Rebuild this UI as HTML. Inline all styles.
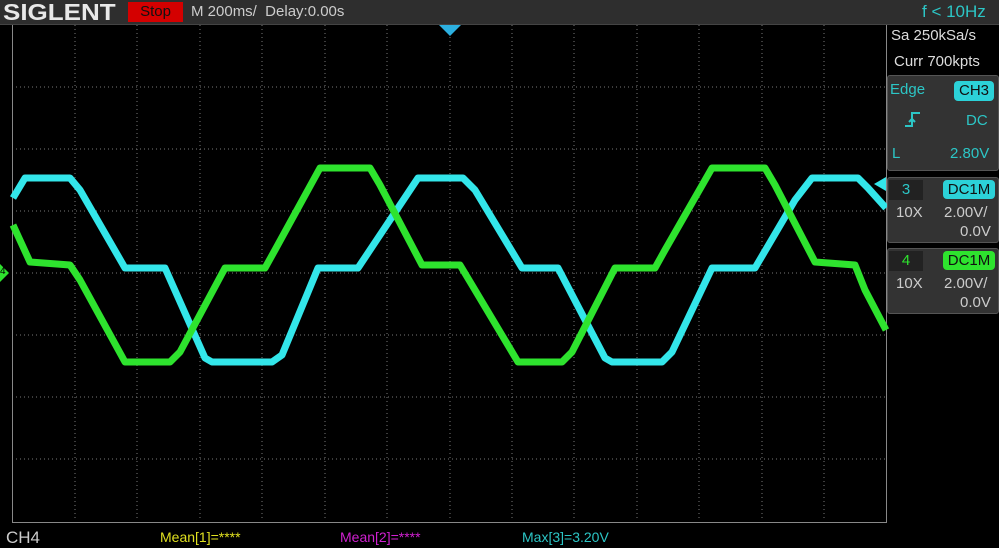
<!DOCTYPE html>
<html><head><meta charset="utf-8"><style>
body{margin:0;width:999px;height:548px;background:#000;overflow:hidden;position:relative;font-family:"Liberation Sans",sans-serif}
.top{position:absolute;left:0;top:0;width:999px;height:24px;background:#2e2e2e;border-bottom:1px solid #444}
.t{position:absolute;white-space:nowrap}
.box{position:absolute;background:#333;border:1px solid #555;border-radius:3px}
</style></head><body>
<div class="top"></div>
<div class="t" style="left:3px;top:-1px;font-size:23px;font-weight:bold;color:#e8e8e8;transform:scaleX(1.13);transform-origin:left">SIGLENT</div>
<div class="t" style="left:128px;top:2px;width:55px;height:20px;background:#d40000;color:#111;font-size:15px;text-align:center;line-height:20px">Stop</div>
<div class="t" style="left:191px;top:3px;font-size:15px;color:#ccc">M 200ms/&nbsp; Delay:0.00s</div>
<div class="t" style="left:922px;top:2px;font-size:17px;color:#2cc6c6">f &lt; 10Hz</div>
<svg width="999" height="548" style="position:absolute;left:0;top:0">
<g stroke="#777" stroke-width="1" stroke-dasharray="1,3">
<line x1="75" y1="25" x2="75" y2="521"/><line x1="137" y1="25" x2="137" y2="521"/><line x1="200" y1="25" x2="200" y2="521"/><line x1="262" y1="25" x2="262" y2="521"/><line x1="325" y1="25" x2="325" y2="521"/><line x1="387" y1="25" x2="387" y2="521"/><line x1="450" y1="25" x2="450" y2="521"/><line x1="512" y1="25" x2="512" y2="521"/><line x1="574" y1="25" x2="574" y2="521"/><line x1="637" y1="25" x2="637" y2="521"/><line x1="699" y1="25" x2="699" y2="521"/><line x1="762" y1="25" x2="762" y2="521"/><line x1="824" y1="25" x2="824" y2="521"/>
<line x1="12" y1="87" x2="886" y2="87"/><line x1="12" y1="149" x2="886" y2="149"/><line x1="12" y1="211" x2="886" y2="211"/><line x1="12" y1="273" x2="886" y2="273"/><line x1="12" y1="335" x2="886" y2="335"/><line x1="12" y1="397" x2="886" y2="397"/><line x1="12" y1="459" x2="886" y2="459"/>
</g>
<g stroke="#888" stroke-width="1"><line x1="12.5" y1="25" x2="12.5" y2="522"/><line x1="12" y1="522.5" x2="887" y2="522.5"/><line x1="886.5" y1="25" x2="886.5" y2="522"/></g>
<polyline fill="none" stroke="#33e6ea" stroke-width="7" stroke-linejoin="round" points="13,198 25,178 70,178 80,190 125,268 165,268 205,358 212,362 272,362 282,355 318,268 358,268 400,205 418,178 463,178 475,190 522,268 558,268 605,358 612,362 662,362 672,352 712,268 755,268 795,200 812,178 858,178 868,188 886,208"/>
<polyline fill="none" stroke="#2ee32e" stroke-width="7" stroke-linejoin="round" points="13,225 30,262 70,265 80,280 125,362 170,362 180,352 225,268 265,268 275,250 320,168 370,168 380,185 422,265 460,265 472,285 518,362 562,362 572,352 615,268 655,268 665,250 712,168 765,168 775,185 815,262 855,265 865,290 886,330"/>
<polygon points="439,25 461,25 450,36" fill="#2cb0e0"/>
<polygon points="0,264 9,273 0,282" fill="#2ee32e"/>
<polygon points="886,177 874,184 886,191" fill="#33e6ea"/>
</svg>
<div class="t" style="left:0px;top:266px;font-size:10px;color:#000">4</div>
<div class="t" style="left:891px;top:27px;font-size:15px;color:#ddd">Sa 250kSa/s</div>
<div class="t" style="left:894px;top:53px;font-size:15px;color:#ddd">Curr 700kpts</div>
<div class="box" style="left:887px;top:75px;width:110px;height:94px"></div>
<div class="t" style="left:890px;top:81px;font-size:15px;color:#2cc6c6">Edge</div>
<div class="t" style="left:954px;top:81px;width:40px;height:20px;background:#2cd2d8;border-radius:4px;color:#111;font-size:15px;text-align:center;line-height:20px">CH3</div>
<svg width="20" height="20" style="position:absolute;left:904px;top:110px"><path d="M1 16H8V3H16M8 9L5 12M8 9L11 12" fill="none" stroke="#2cc6c6" stroke-width="2"/></svg>
<div class="t" style="left:966px;top:112px;font-size:15px;color:#2cc6c6">DC</div>
<div class="t" style="left:892px;top:145px;font-size:15px;color:#2cc6c6">L</div>
<div class="t" style="left:950px;top:145px;font-size:15px;color:#2cc6c6">2.80V</div>
<div class="box" style="left:887px;top:177px;width:110px;height:64px"></div>
<div class="t" style="left:889px;top:180px;width:34px;height:20px;background:#222;color:#2cc6c6;font-size:15px;text-align:center;line-height:20px">3</div>
<div class="t" style="left:943px;top:180px;width:52px;height:19px;background:#2cd2d8;border-radius:4px;color:#111;font-size:15px;text-align:center;line-height:19px">DC1M</div>
<div class="t" style="left:896px;top:204px;font-size:15px;color:#ccc">10X</div>
<div class="t" style="left:944px;top:204px;font-size:15px;color:#ccc">2.00V/</div>
<div class="t" style="left:960px;top:223px;font-size:15px;color:#ccc">0.0V</div>
<div class="box" style="left:887px;top:248px;width:110px;height:64px"></div>
<div class="t" style="left:889px;top:251px;width:34px;height:20px;background:#222;color:#2ee32e;font-size:15px;text-align:center;line-height:20px">4</div>
<div class="t" style="left:943px;top:251px;width:52px;height:19px;background:#2ee32e;border-radius:4px;color:#111;font-size:15px;text-align:center;line-height:19px">DC1M</div>
<div class="t" style="left:896px;top:275px;font-size:15px;color:#ccc">10X</div>
<div class="t" style="left:944px;top:275px;font-size:15px;color:#ccc">2.00V/</div>
<div class="t" style="left:960px;top:294px;font-size:15px;color:#ccc">0.0V</div>
<div class="t" style="left:6px;top:528px;font-size:17px;color:#ccc">CH4</div>
<div class="t" style="left:160px;top:529px;font-size:14px;color:#e0e020">Mean[1]=****</div>
<div class="t" style="left:340px;top:529px;font-size:14px;color:#d020d0">Mean[2]=****</div>
<div class="t" style="left:522px;top:529px;font-size:14px;color:#2cc6c6">Max[3]=3.20V</div>
</body></html>
